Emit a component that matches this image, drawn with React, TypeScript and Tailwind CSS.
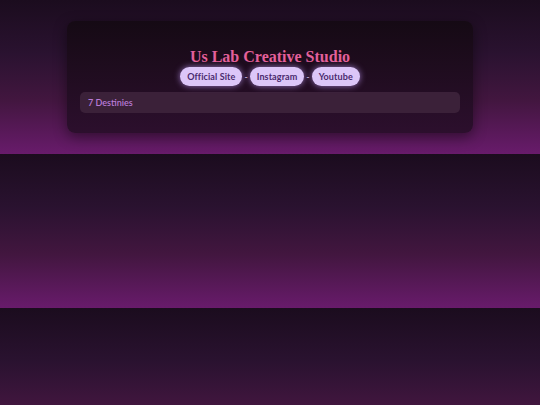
import React from "react";

export default function App() {
  const links = ["Official Site", "Instagram", "Youtube"];
  return (
    <div className="h-[405px] w-full overflow-hidden bg-[linear-gradient(to_bottom,#1b0c1e_0%,#2a1230_35%,#42163f_65%,#681b6b_100%)] bg-[length:100%_154px] bg-repeat-y">
      <div className="h-[154px] pt-[21px]">
        <div className="mx-auto w-[406px] h-[112px] rounded-[8px] bg-[linear-gradient(to_bottom,#150a14,#2c0f2d)] shadow-[0_4px_14px_rgba(0,0,0,0.45)] px-[13px] pt-[27px]">
          <h1 className="text-center text-[16px] leading-[18px] font-bold text-[#e3609a]" style={{ fontFamily: '"Liberation Serif", "DejaVu Serif", serif' }}>
            Us Lab Creative Studio
          </h1>
          <div className="mt-[1px] flex items-center justify-center gap-[2px]" style={{ fontFamily: 'Lato, "Open Sans", sans-serif' }}>
            {links.map((l, i) => (
              <React.Fragment key={l}>
                {i > 0 && <span className="text-[9px] text-[#d8c4ee]">-</span>}
                <span className="h-[19px] px-[7px] flex items-center rounded-full bg-[#dcc6f8] text-[#4a2a6e] text-[9px] font-bold tracking-[0.1px] shadow-[0_0_6px_rgba(200,160,255,0.7)]">
                  {l}
                </span>
              </React.Fragment>
            ))}
          </div>
          <div className="mt-[6px] h-[21px] rounded-[5px] bg-[#3b2139] px-[8px] flex items-center text-[9px] font-semibold text-[#b97ad6]" style={{ fontFamily: 'Lato, "Open Sans", sans-serif' }}>
            7 Destinies
          </div>
        </div>
      </div>
    </div>
  );
}
